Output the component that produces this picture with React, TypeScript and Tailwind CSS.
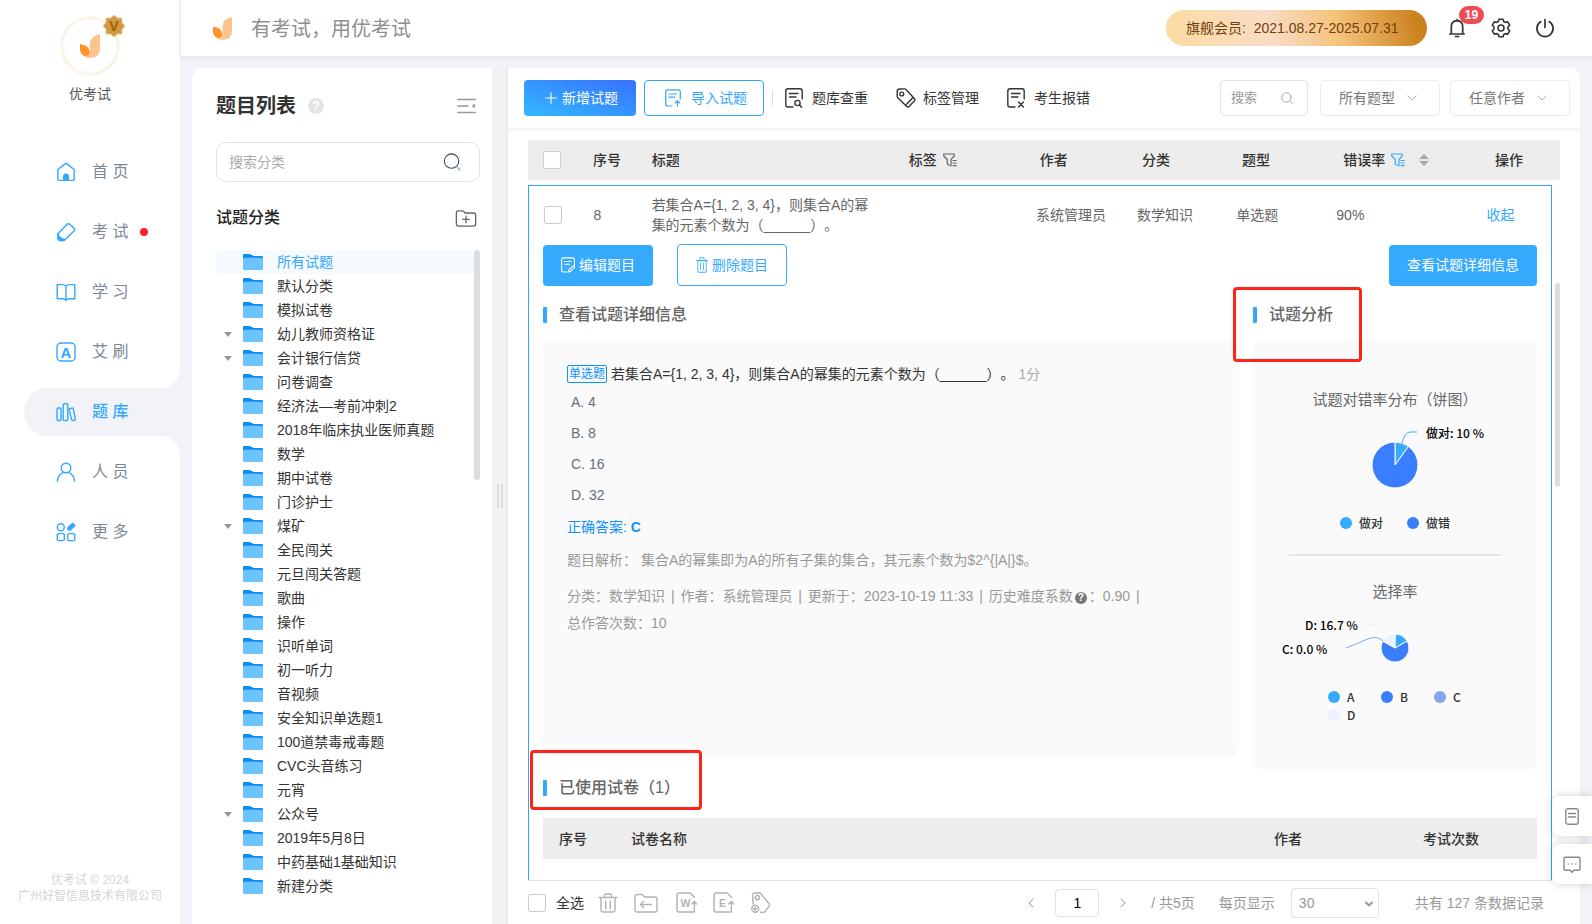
import { useState, type ReactNode, type SVGProps } from 'react';
import { ChevronDown, ChevronLeft, ChevronRight, Plus, Search } from 'lucide-react';

type IconProps = SVGProps<SVGSVGElement>;

function Icon({ children, ...props }: IconProps) {
  return (
    <svg
      viewBox="0 0 20 20"
      fill="none"
      stroke="currentColor"
      strokeWidth="1.4"
      strokeLinecap="round"
      strokeLinejoin="round"
      aria-hidden="true"
      {...props}
    >
      {children}
    </svg>
  );
}

const HomeIcon = (p: IconProps) => (
  <Icon {...p}>
    <path d="M1.800 8.500Q1.800 7.500 2.500 7L9 1.900q1-.7 2 0L17.500 7q.7.5.7 1.500v8.400q0 1.500-1.500 1.500H3.300q-1.500 0-1.500-1.500Z" />
    <path d="M7 18.400v-4a3 3 0 0 1 6 0v4Z" fill="currentColor" stroke="none" />
  </Icon>
);

const ExamIcon = (p: IconProps) => (
  <Icon {...p}>
    <path d="M2 11.800 10.800 2.400q1.600-1.400 3.200 0l4 3.800q1.200 1.400 0 2.800L9.400 17.600q-1 .9-2.400.9H4.200q-2.200-.2-2.200-2.400Z" />
    <path d="M2 11.800q1 4.700 7.400 5.800-1 .9-2.400.9H4.200q-2.200-.2-2.200-2.400Z" fill="currentColor" />
  </Icon>
);

const BookIcon = (p: IconProps) => (
  <Icon {...p}>
    <path d="M10 4v14.500M10 4Q8.500 2.600 6.500 2.600H1.200v14.200h5.600q2 0 3.200 1.600M10 4q1.500-1.400 3.500-1.400h5.300v14.200h-5.600q-2 0-3.200 1.600" />
  </Icon>
);

const AiIcon = (p: IconProps) => (
  <Icon {...p}>
    <rect x="1" y="1" width="18" height="18" rx="4" />
    <text x="10" y="15.500" textAnchor="middle" fontSize="15" fontWeight="bold" fill="currentColor" stroke="none">
      A
    </text>
  </Icon>
);

const LibraryIcon = (p: IconProps) => (
  <Icon {...p}>
    <rect x="1" y="6" width="4" height="12.500" rx="1.200" />
    <rect x="7.200" y="1.800" width="4.600" height="16.700" rx="1.200" />
    <path d="m13.700 6.700 2.300-.6q1.100-.2 1.300.8l2 9.900q.1 1.100-.9 1.400l-1.500.3q-1 .1-1.200-.9l-2.600-9.700q-.2-.9.600-1.200Z" />
  </Icon>
);

const PeopleIcon = (p: IconProps) => (
  <Icon {...p}>
    <circle cx="10" cy="6" r="4.800" />
    <path d="M1.400 19.200q.4-6.200 5.200-8.400M18.600 19.200q-.4-6.200-5.200-8.400" />
  </Icon>
);

const MoreIcon = (p: IconProps) => (
  <Icon {...p}>
    <circle cx="4.800" cy="5.200" r="3.500" />
    <rect x="1.300" y="11.600" width="7" height="7" rx="1" />
    <rect x="11.700" y="11.600" width="7" height="7" rx="1" />
    <path d="m11.700 7.600.6-2.400 4.200-3.800 2.300 2-4.400 4.600Z" fill="currentColor" />
  </Icon>
);

const Leaf = (p: IconProps) => (
  <svg viewBox="0 0 20 24" aria-hidden="true" {...p}>
    <path d="M20 0v15q-.3 8.700-10 9-4-.1-7-2.500l7-3V8.500Q10.800 2 20 0Z" fill="#ffc48c" />
    <path d="M0 10q9.400 1.200 9.700 8-.3 3.700-5.200 4Q0 20 0 15Z" fill="#ff9328" />
  </svg>
);

const FolderIcon = (p: IconProps) => (
  <svg viewBox="0 0 20 16" aria-hidden="true" {...p}>
    <path d="M0 1.200Q0 0 1.200 0H6q1 0 1.800.5l2.700 1.400h8.300q1.200 0 1.200 1.100v4H0Z" fill="#0d8bee" />
    <path d="M0 4.800q0-1.100 1.200-1.100h17.600q1.200 0 1.200 1.100v9.900q0 1.300-1.200 1.300H1.200Q0 16 0 14.700Z" fill="#6cc4ff" />
  </svg>
);

const FolderPlusIcon = (p: IconProps) => (
  <Icon viewBox="0 0 22 18" {...p}>
    <path d="M.8 3.200Q.8 1 3 1h4.200q1 0 1.700.8l1 1.400h9Q21.200 3.200 21.200 5.400v9.400q0 2.200-2.200 2.200H3q-2.200 0-2.200-2.200Z" />
    <path d="M11 6.500v7M7.500 10h7" />
  </Icon>
);

const CollapseIcon = (p: IconProps) => (
  <Icon viewBox="0 0 19 16" {...p}>
    <path d="M.8 1.500h17.400M.8 8h10.400M.8 14.500h17.400" />
    <path d="M18 5.500v5L14.800 8Z" fill="currentColor" stroke="none" />
  </Icon>
);

// Sheet of paper with two text lines, the corner mark is passed as children
const DocIcon = ({ children, ...p }: IconProps) => (
  <Icon viewBox="0 0 18 20" {...p}>
    <path d="M8 19H3q-2.200 0-2.200-2.200V3Q.8.800 3 .8h12q2.200 0 2.200 2.200v8" />
    <path d="M4.500 5.500h8.500M4.500 9h6.500" />
    {children}
  </Icon>
);

const TagIcon = (p: IconProps) => (
  <Icon {...p}>
    <path d="M1.200 3.400Q1.300 1.200 3.500 1l5-.1q1 0 1.700.8l8.300 9q.8 1 0 2l-5.800 6q-1 .8-1.900-.1L1.800 9.800q-.6-.8-.6-1.600Z" />
    <circle cx="5.800" cy="6" r="1.900" />
    <path d="m10.500 16.300 6.300-6.600" />
  </Icon>
);

const FilterIcon = (p: IconProps) => (
  <Icon viewBox="0 0 14 14" strokeWidth="1.200" {...p}>
    <path d="M6.500 12.500 4.300 11V6.500L.8 3V1h10.400v2L8 6.300V13M10 7.500h3.200M10 10h3.200M10 12.600h3.200" />
  </Icon>
);

const TrashIcon = (p: IconProps) => (
  <Icon {...p}>
    <path d="M1 4.500h18M6.500 4.500V2q0-1 1-1h5q1 0 1 1v2.500M3 4.500v12.800Q3 19 4.700 19h10.600q1.700 0 1.700-1.700V4.500M7.700 8v8M12.300 8v8" />
  </Icon>
);

const ExportIcon = ({ letter, ...p }: IconProps & { letter: string }) => (
  <Icon {...p}>
    <path d="M17 19H3q-2 0-2-2V3q0-2 2-2h10.500L17.500 5M17.500 19V9.500M15 11.500 17.500 9l2.200 2.500" />
    <text x="9" y="14.500" textAnchor="middle" fontSize="10" fontWeight="bold" fill="currentColor" stroke="none">
      {letter}
    </text>
  </Icon>
);

const navItems = [
  { label: '首 页', icon: HomeIcon },
  { label: '考 试', icon: ExamIcon, dot: true },
  { label: '学 习', icon: BookIcon },
  { label: '艾 刷', icon: AiIcon },
  { label: '题 库', icon: LibraryIcon, active: true },
  { label: '人 员', icon: PeopleIcon },
  { label: '更 多', icon: MoreIcon },
];

const categories = [
  { name: '所有试题' },
  { name: '默认分类' },
  { name: '模拟试卷' },
  { name: '幼儿教师资格证', children: true },
  { name: '会计银行信贷', children: true },
  { name: '问卷调查' },
  { name: '经济法—考前冲刺2' },
  { name: '2018年临床执业医师真题' },
  { name: '数学' },
  { name: '期中试卷' },
  { name: '门诊护士' },
  { name: '煤矿', children: true },
  { name: '全民闯关' },
  { name: '元旦闯关答题' },
  { name: '歌曲' },
  { name: '操作' },
  { name: '识听单词' },
  { name: '初一听力' },
  { name: '音视频' },
  { name: '安全知识单选题1' },
  { name: '100道禁毒戒毒题' },
  { name: 'CVC头音练习' },
  { name: '元宵' },
  { name: '公众号', children: true },
  { name: '2019年5月8日' },
  { name: '中药基础1基础知识' },
  { name: '新建分类' },
];

function Sidebar() {
  return (
    <aside className="flex w-[180px] shrink-0 flex-col bg-white">
      <div className="flex flex-col items-center pt-4">
        <div className="relative flex size-[60px] items-center justify-center rounded-full border-2 border-[#fbf6ec] shadow-[inset_0_0_0_1px_#f7ead2]">
          <Leaf className="h-[26px] w-5" />
          <svg viewBox="0 0 24 24" className="absolute -top-1 -right-2 size-6" aria-hidden="true">
            <path
              d="m12 1 3.400 3H20v4.600l3 3.400-3 3.400V20h-4.600L12 23l-3.400-3H4v-4.600L1 12l3-3.400V4h4.600Z"
              fill="#cf9a45"
              stroke="#ecc781"
            />
            <text x="12" y="17" textAnchor="middle" fontSize="14" fontWeight="bold" fill="#a35e07">
              V
            </text>
          </svg>
        </div>
        <p className="mt-2 text-sm text-[#555]">优考试</p>
      </div>
      <nav className="mt-11 flex flex-col gap-3">
        {navItems.map(({ label, icon: ItemIcon, active, dot }) => (
          <a
            key={label}
            href="#"
            className={
              active
                ? "relative ml-6 flex h-12 items-center rounded-l-full bg-[#f2f3f8] pl-8 font-medium text-[#33a7ff] before:absolute before:-top-5 before:right-0 before:size-5 before:bg-[radial-gradient(circle_at_0_0,transparent_20px,#f2f3f8_20px)] before:content-[''] after:absolute after:right-0 after:-bottom-5 after:size-5 after:bg-[radial-gradient(circle_at_0_100%,transparent_20px,#f2f3f8_20px)] after:content-['']"
                : 'ml-6 flex h-12 items-center pl-8 text-[#7d8896]'
            }
          >
            <ItemIcon className="size-5 text-[#33a7ff]" />
            <span className="ml-4">{label}</span>
            {dot && <span className="ml-3 size-2 rounded-full bg-[#ff1f2a]" />}
          </a>
        ))}
      </nav>
      <p className="mt-auto pb-5 text-center text-xs leading-4 text-[#d5d5d5]">
        优考试 © 2024
        <br />
        广州好智信息技术有限公司
      </p>
    </aside>
  );
}

function Header() {
  return (
    <header className="relative z-10 flex h-14 shrink-0 items-center border-l border-[#e9eaf1] bg-white pr-[37px] pl-8 shadow-[0_1px_6px_rgba(0,0,0,0.08)]">
      <Leaf className="h-[23px] w-[19px]" />
      <p className="ml-[19px] pt-0.5 text-xl text-[#8f8f8f]">有考试，用优考试</p>
      <div className="ml-auto flex h-9 w-[261px] items-center rounded-full bg-[linear-gradient(75deg,#fbdca6_5%,#f8dcc4_40%,#f5c37c_65%,#cb821d_95%)] pl-5 text-sm whitespace-pre text-[#73400c]">
        旗舰会员:  2021.08.27-2025.07.31
      </div>
      <button type="button" aria-label="消息" className="relative ml-5 text-[#333]">
        <Icon className="size-5" strokeWidth="1.700">
          <path d="M10 1.500v1M4.300 15.800V9q0-6.200 5.700-6.400Q15.700 2.800 15.700 9v6.800M2.800 16h14.400M8.500 18.500h3" />
        </Icon>
        <span className="absolute -top-3 left-3 flex h-[18px] w-[25px] items-center justify-center rounded-full bg-[#f04b52] text-xs font-bold text-white">
          19
        </span>
      </button>
      <button type="button" aria-label="设置" className="ml-6 text-[#333]">
        <Icon className="size-5" strokeWidth="1.600">
          <path d="M8 1.200h4l.7 2.300 1.600.9 2.400-.6 2 3.400-1.700 1.800v2l1.700 1.800-2 3.400-2.400-.6-1.600.9-.7 2.300H8l-.7-2.300-1.600-.9-2.400.6-2-3.400L3 11V9L1.300 7.200l2-3.400 2.400.6 1.600-.9Z" />
          <circle cx="10" cy="10" r="3" />
        </Icon>
      </button>
      <button type="button" aria-label="退出" className="ml-6 text-[#333]">
        <Icon className="size-5" strokeWidth="1.700">
          <path d="M10 1.500v8M5.800 3.600a8.100 8.100 0 1 0 8.400 0" />
        </Icon>
      </button>
    </header>
  );
}

function CategoryPanel() {
  const [selected, setSelected] = useState('所有试题');

  return (
    <section className="flex w-[300px] shrink-0 flex-col overflow-hidden rounded-tl-[10px] bg-white px-6 pr-3">
      <div className="mt-[25px] flex h-[26px] items-center pr-1">
        <h1 className="text-xl font-bold text-[#333]">题目列表</h1>
        <span className="ml-3 flex size-4 items-center justify-center rounded-full bg-[#e4e4e4] text-xs font-bold text-white">
          ?
        </span>
        <button type="button" aria-label="收起列表" className="ml-auto text-[#999]">
          <CollapseIcon className="h-4 w-[19px]" />
        </button>
      </div>
      <label className="mt-[23px] flex h-10 shrink-0 items-center rounded-[10px] border border-[#e2e2e2] pr-[18px] pl-3">
        <input
          aria-label="搜索分类"
          placeholder="搜索分类"
          className="min-w-0 flex-1 text-sm outline-none placeholder:text-[#aaa]"
        />
        <Icon className="size-[18px] text-[#444]" strokeWidth="1.200">
          <circle cx="9.500" cy="9" r="8" />
          <path d="m15.500 15.500 3.300 3.300" stroke="#6cc4ff" strokeWidth="1.800" />
        </Icon>
      </label>
      <div className="mt-6 flex h-6 shrink-0 items-center pr-[3px]">
        <h2 className="font-medium text-[#222]">试题分类</h2>
        <button type="button" aria-label="新建分类" className="ml-auto text-[#666]">
          <FolderPlusIcon className="h-[17px] w-[22px]" />
        </button>
      </div>
      <div className="mt-5 flex min-h-0 flex-1">
        <ul className="min-w-0 flex-1 text-sm text-[#333]">
          {categories.map((c) => (
            <li key={c.name}>
              <button
                type="button"
                onClick={() => setSelected(c.name)}
                className={
                  c.name === selected
                    ? 'flex h-6 w-full items-center rounded bg-[#f5faff] text-[#33a7ff]'
                    : 'flex h-6 w-full items-center'
                }
              >
                <span className="flex w-[27px] pl-2">
                  {c.children && (
                    <svg viewBox="0 0 8 5" className="h-[5px] w-2" aria-hidden="true">
                      <path d="M0 0h8L4 5Z" fill="#999" />
                    </svg>
                  )}
                </span>
                <FolderIcon className="h-4 w-5" />
                <span className="ml-3.5 whitespace-nowrap">{c.name}</span>
              </button>
            </li>
          ))}
        </ul>
        <div className="h-[230px] w-1.5 rounded-full bg-[#dcdddf]" />
      </div>
    </section>
  );
}

function ToolbarSelect({ label, options }: { label: string; options: string[] }) {
  return (
    <div className="relative w-[120px]">
      <select
        aria-label={label}
        className="h-9 w-full appearance-none rounded border border-[#ececec] bg-white pl-[18px] text-sm text-[#777] outline-none"
      >
        {options.map((o) => (
          <option key={o}>{o}</option>
        ))}
      </select>
      <ChevronDown className="pointer-events-none absolute top-2.5 right-5 size-4 text-[#999]" strokeWidth={1.2} />
    </div>
  );
}

function Toolbar() {
  return (
    <div className="flex h-[60px] shrink-0 items-center pr-2.5 pl-4 text-sm text-[#333] shadow-[0_1px_4px_rgba(0,0,0,0.1)]">
      <button
        type="button"
        className="flex h-9 w-28 items-center justify-center gap-0.5 rounded bg-linear-to-tr from-[#36b8ff] to-[#386fff] text-white"
      >
        <Plus className="size-[18px]" strokeWidth={1.5} />
        新增试题
      </button>
      <button
        type="button"
        className="ml-2 flex h-9 w-[120px] items-center justify-center gap-2.5 rounded border border-[#33a7ff] pl-1 text-[#33a7ff]"
      >
        <DocIcon className="h-[18px] w-4">
          <path d="M14 19v-6M11.500 15.500 14 13l2.500 2.500" />
        </DocIcon>
        导入试题
      </button>
      <span className="ml-2 h-4 w-px bg-[#ddd]" />
      <button type="button" className="ml-3 flex items-center gap-[9px]">
        <DocIcon className="h-5 w-[18px]">
          <circle cx="12.500" cy="15" r="2.600" />
          <path d="m14.500 17 2.200 2.200" />
        </DocIcon>
        题库查重
      </button>
      <button type="button" className="ml-7 flex items-center gap-[7px]">
        <TagIcon className="size-5" />
        标签管理
      </button>
      <button type="button" className="ml-7 flex items-center gap-[9px]">
        <DocIcon className="h-5 w-[18px]">
          <path d="m11.500 14 5 5M16.500 14l-5 5" />
        </DocIcon>
        考生报错
      </button>
      <label className="ml-auto flex h-9 w-[88px] items-center rounded border border-[#e2e2e2] px-2.5">
        <input aria-label="搜索" placeholder="搜索" className="w-0 flex-1 text-[13px] outline-none placeholder:text-[#999]" />
        <Search className="mr-[3px] size-3.5 text-[#999]" strokeWidth={1.5} />
      </label>
      <div className="ml-3 flex gap-2.5">
        <ToolbarSelect label="题型" options={['所有题型', '单选题', '多选题', '判断题']} />
        <ToolbarSelect label="作者" options={['任意作者', '系统管理员']} />
      </div>
    </div>
  );
}

function Checkbox({ label }: { label: string }) {
  return (
    <input
      type="checkbox"
      aria-label={label}
      className="block size-[18px] appearance-none rounded-[2px] border border-[#ccc] bg-white checked:bg-[#33a7ff]"
    />
  );
}

// Header and body are separate tables, so both share these column widths
function Columns() {
  return (
    <colgroup>
      <col className="w-[6.3%]" />
      <col className="w-[5.7%]" />
      <col className="w-[24.9%]" />
      <col className="w-[12.7%]" />
      <col className="w-[9.9%]" />
      <col className="w-[9.7%]" />
      <col className="w-[9.8%]" />
      <col className="w-[14.7%]" />
      <col className="w-[6.3%]" />
    </colgroup>
  );
}

function SectionTitle({ children }: { children: ReactNode }) {
  return (
    <h3 className="flex h-5 items-center gap-3 font-medium text-[#666]">
      <span className="h-4 w-1 rounded-[1px] bg-[#33a7ff]" />
      {children}
    </h3>
  );
}

function LegendItem({ color, label }: { color: string; label: string }) {
  return (
    <span className="flex items-center gap-[7px]">
      <span className="size-3 rounded-full" style={{ backgroundColor: color }} />
      {label}
    </span>
  );
}

function slice(cx: number, cy: number, r: number, from: number, to: number) {
  const point = (t: number) => {
    const a = t * 2 * Math.PI - Math.PI / 2;
    return `${cx + r * Math.cos(a)} ${cy + r * Math.sin(a)}`;
  };
  return `M${cx} ${cy}L${point(from)}A${r} ${r} 0 ${to - from > 0.5 ? 1 : 0} 1 ${point(to)}Z`;
}

function Analysis() {
  return (
    <div className="mt-[15px] flex flex-col rounded-[10px] bg-[#fafafa] px-9 pt-[49px] pb-[46px] font-['Noto_Sans_CJK_SC',sans-serif] text-xs font-medium text-[#333]">
      <h4 className="text-center text-[15px] leading-5 font-normal text-[#666]">试题对错率分布（饼图）</h4>
      <svg viewBox="0 0 212 80" className="mt-[11px] h-20 w-[212px]">
        <path d={slice(106, 45, 23, 0, 0.1)} fill="#36aaff" stroke="#fff" />
        <path d={slice(106, 45, 23, 0.1, 1)} fill="#397eff" stroke="#fff" />
        <path d="M113 23q3-11 8-11h7" fill="none" stroke="#36aaff" />
        <text x="137" y="18" fill="#000">
          做对: 10 %
        </text>
      </svg>
      <div className="mt-[15px] flex h-4 justify-center gap-6">
        <LegendItem color="#36aaff" label="做对" />
        <LegendItem color="#397eff" label="做错" />
      </div>
      <hr className="mt-[23px] border-t-2 border-[#e6e6e6]" />
      <h4 className="mt-[25px] text-center text-[15px] leading-5 font-normal text-[#666]">选择率</h4>
      <svg viewBox="0 0 212 64" className="mt-[9px] h-16 w-[212px] overflow-visible">
        <path d={slice(106, 38, 14, 0, 0.167)} fill="#36aaff" stroke="#fff" />
        <path d={slice(106, 38, 14, 0.167, 0.833)} fill="#397eff" stroke="#fff" />
        <path d={slice(106, 38, 14, 0.833, 1)} fill="#ecf0ff" stroke="#fff" />
        <path d="M79 14q15 0 20 12" fill="none" stroke="#ecf0ff" />
        <path d="M57 38 80 28.500Q88 25.500 94 31" fill="none" stroke="#83a6ec" />
        <text x="16" y="20" fill="#000">
          D: 16.7 %
        </text>
        <text x="-7" y="44" fill="#000">
          C: 0.0 %
        </text>
      </svg>
      <div className="mx-auto mt-3.5 grid grid-cols-[53px_53px_28px] leading-[18px]">
        <LegendItem color="#36aaff" label="A" />
        <LegendItem color="#397eff" label="B" />
        <LegendItem color="#83a6ec" label="C" />
        <LegendItem color="#ecf0ff" label="D" />
      </div>
    </div>
  );
}

function Divider() {
  return <span className="mx-0.5">|</span>;
}

function QuestionDetail() {
  return (
    <div className="mt-[15px] rounded-[10px] bg-[#fafafa] px-6 pt-[21px] pb-[120px] text-sm text-[#999]">
      <p className="flex h-[26px] items-center text-[#333]">
        <span className="rounded-[2px] border border-[#0d93ff] px-px text-xs leading-4 text-[#0d93ff]">单选题</span>
        <span className="ml-1">{'若集合A={1, 2, 3, 4}，则集合A的幂集的元素个数为（______）。'}</span>
        <span className="ml-1 text-[#aaa]">1分</span>
      </p>
      <ul className="pl-1 leading-[31px] text-[#666e78]">
        <li>A. 4</li>
        <li>B. 8</li>
        <li>C. 16</li>
        <li>D. 32</li>
      </ul>
      <p className="leading-8 text-[#0d93ff]">
        正确答案: <b>C</b>
      </p>
      <p className="leading-[34px]">{'题目解析： 集合A的幂集即为A的所有子集的集合，其元素个数为$2^{|A|}$。'}</p>
      <p className="mt-1.5 leading-[27px]">
        分类：数学知识 <Divider /> 作者：系统管理员 <Divider /> 更新于：2023-10-19 11:33 <Divider /> 历史难度系数
        <span className="mx-0.5 inline-flex size-3 items-center justify-center rounded-full bg-[#777] text-[10px] leading-none font-bold text-white">
          ?
        </span>
        ：0.90 <Divider /> <span className="inline-block">总作答次数：10</span>
      </p>
    </div>
  );
}

function QuestionRow() {
  return (
    <div className="min-w-0 flex-1 self-start border border-[#33a7ff] pb-10">
      <table className="w-full table-fixed text-left text-sm text-[#666]">
        <Columns />
        <tbody>
          <tr className="h-[58px]">
            <td className="pl-[15px]">
              <Checkbox label="选择试题8" />
            </td>
            <td>8</td>
            <td className="pr-7 leading-5">{'若集合A={1, 2, 3, 4}，则集合A的幂集的元素个数为（______）。'}</td>
            <td />
            <td>系统管理员</td>
            <td>数学知识</td>
            <td>单选题</td>
            <td>90%</td>
            <td>
              <a href="#" className="text-[#33a7ff]">
                收起
              </a>
            </td>
          </tr>
        </tbody>
      </table>
      <div className="px-3.5">
        <div className="flex h-[42px] items-center text-sm">
          <button type="button" className="flex h-[41px] w-[110px] items-center justify-center gap-1 rounded bg-[#36aaff] text-white">
            <DocIcon className="h-4 w-3.5">
              <path d="m9.500 19 .8-3 6-5.500 1.800 2-6 5.700Z" />
            </DocIcon>
            编辑题目
          </button>
          <button
            type="button"
            className="ml-6 flex h-[42px] w-[110px] items-center justify-center gap-1 rounded border border-[#36aaff] text-[#36aaff]"
          >
            <TrashIcon className="h-4 w-3" preserveAspectRatio="none" />
            删除题目
          </button>
          <button type="button" className="ml-auto h-[41px] w-[148px] rounded bg-[#36aaff] text-white">
            查看试题详细信息
          </button>
        </div>
        <div className="mt-[19px] flex items-start gap-3.5">
          <section className="min-w-0 flex-1">
            <SectionTitle>查看试题详细信息</SectionTitle>
            <QuestionDetail />
          </section>
          <section className="relative w-[284px] shrink-0">
            <SectionTitle>试题分析</SectionTitle>
            <Analysis />
            <span className="pointer-events-none absolute -top-[18px] -left-5 h-[75px] w-[129px] rounded border-3 border-[#ff2317]" />
          </section>
        </div>
        <section className="relative mt-2">
          <SectionTitle>已使用试卷（1）</SectionTitle>
          <span className="pointer-events-none absolute -top-7 -left-[13px] h-[60px] w-[172px] rounded border-3 border-[#ff2317]" />
          <table className="mt-5 w-full table-fixed text-left text-sm text-[#333]">
            <thead>
              <tr className="h-[41px] bg-[#ededed]">
                <th className="w-[88px] pl-4 font-medium">序号</th>
                <th className="font-medium">试卷名称</th>
                <th className="w-[149px] font-medium">作者</th>
                <th className="w-[114px] font-medium">考试次数</th>
              </tr>
            </thead>
          </table>
        </section>
      </div>
    </div>
  );
}

function Footer() {
  return (
    <footer className="mr-2 flex h-11 shrink-0 items-center border-t border-[#e2e2e2] pr-2 text-sm text-[#999]">
      <label className="flex items-center gap-2.5 text-[#333]">
        <Checkbox label="全选" />
        全选
      </label>
      <div className="ml-3.5 flex items-center gap-4 text-[#b3b3b3]">
        <button type="button" aria-label="删除">
          <TrashIcon className="size-5" />
        </button>
        <button type="button" aria-label="移动">
          <Icon viewBox="0 0 24 20" className="h-5 w-6">
            <path d="M1 3.500Q1 1.500 3 1.500h5l2.500 2.500H21q2 0 2 2v11q0 2-2 2H3q-2 0-2-2ZM17.500 11.500h-11M9.500 8.500l-3 3 3 3" />
          </Icon>
        </button>
        <button type="button" aria-label="导出Word" className="pl-0.5">
          <ExportIcon letter="W" className="size-[21px]" />
        </button>
        <button type="button" aria-label="导出Excel">
          <ExportIcon letter="E" className="size-[21px]" />
        </button>
        <button type="button" aria-label="添加标签">
          <Icon className="size-[21px]">
            <path d="M3 11.500 2.400 2.800Q2.500 1 4.200.9L8.700.8q1 0 1.600.7l8 10q.6 1 0 1.900L14.500 18.500q-.6.700-1.500.7h-3" />
            <circle cx="7" cy="5.300" r="2" />
            <circle cx="5" cy="16" r="3.300" />
            <path d="M5 14.500v3M3.500 16h3" />
          </Icon>
        </button>
      </div>
      <div className="ml-auto flex items-center">
        <button type="button" aria-label="上一页">
          <ChevronLeft className="size-4" strokeWidth={1.5} />
        </button>
        <input
          aria-label="页码"
          defaultValue="1"
          className="ml-4 h-7 w-11 rounded border border-[#e2e2e2] text-center text-black outline-none"
        />
        <button type="button" aria-label="下一页" className="ml-4">
          <ChevronRight className="size-4" strokeWidth={1.5} />
        </button>
        <span className="ml-5">/ 共5页</span>
        <label htmlFor="page-size" className="ml-6">
          每页显示
        </label>
        <div className="relative ml-4">
          <select
            id="page-size"
            defaultValue="30"
            className="h-[30px] w-[88px] appearance-none rounded border border-[#e2e2e2] bg-white pl-[7px] outline-none"
          >
            <option>10</option>
            <option>30</option>
            <option>50</option>
          </select>
          <ChevronDown className="pointer-events-none absolute top-2.5 right-1 size-3" strokeWidth={4} />
        </div>
        <span className="ml-9">共有 127 条数据记录</span>
      </div>
    </footer>
  );
}

function QuestionPanel() {
  return (
    <main className="flex min-w-0 flex-1 flex-col overflow-hidden rounded-tr-[10px] bg-white">
      <Toolbar />
      <div className="mt-3 flex min-h-0 flex-1 flex-col px-5">
        <table className="w-full table-fixed text-left text-sm text-[#333]">
          <Columns />
          <thead>
            <tr className="h-10 bg-[#ededed] *:font-medium">
              <th className="pl-[15px]">
                <Checkbox label="选择全部试题" />
              </th>
              <th>序号</th>
              <th>标题</th>
              <th>
                <span className="flex items-center gap-1.5">
                  标签
                  <FilterIcon className="size-3.5 text-[#666]" />
                </span>
              </th>
              <th>作者</th>
              <th>分类</th>
              <th>题型</th>
              <th>
                <span className="flex items-center gap-1.5">
                  错误率
                  <FilterIcon className="size-3.5 text-[#33a7ff]" />
                  <svg viewBox="0 0 10 12" className="ml-2 h-3 w-2.5" aria-hidden="true">
                    <path d="M5 0 10 5H0ZM5 12 0 7h10Z" fill="#a8a8a8" />
                  </svg>
                </span>
              </th>
              <th>操作</th>
            </tr>
          </thead>
        </table>
        <div className="mt-[5px] flex min-h-0 flex-1 gap-[3px] overflow-hidden">
          <QuestionRow />
          <div className="mt-[98px] h-[204px] w-[5px] rounded-full bg-[#dedede]" />
        </div>
        <Footer />
      </div>
    </main>
  );
}

function FloatingTools() {
  return (
    <div className="fixed right-0 bottom-10 z-20 flex flex-col gap-2 text-[#888]">
      <button
        type="button"
        aria-label="文档"
        className="flex size-10 items-center justify-center rounded-l-lg bg-white shadow-[0_0_10px_rgba(0,0,0,0.18)]"
      >
        <Icon viewBox="0 0 14 17" className="h-[17px] w-3.5">
          <rect x=".8" y=".8" width="12.400" height="15.400" rx="2" />
          <path d="M3.500 5.500h7M3.500 9h7" />
        </Icon>
      </button>
      <button
        type="button"
        aria-label="客服"
        className="flex size-10 items-center justify-center rounded-l-lg bg-white shadow-[0_0_10px_rgba(0,0,0,0.18)]"
      >
        <Icon viewBox="0 0 18 17" className="h-[17px] w-[18px]">
          <path d="M2 1.200h14q1 0 1 1v11q0 1-1 1h-5L9 16.200l-2-2H2q-1 0-1-1v-11q0-1 1-1ZM5.200 8h.1M9 8h.1M12.800 8h.1" />
        </Icon>
      </button>
    </div>
  );
}

export default function App() {
  return (
    <div className="flex h-screen overflow-hidden bg-[#f2f3f8] font-['Liberation_Sans','Noto_Sans_CJK_SC',sans-serif] [text-spacing-trim:space-all]">
      <Sidebar />
      <div className="flex min-w-0 flex-1 flex-col">
        <Header />
        <div className="flex min-h-0 flex-1 pt-3 pr-3 pl-3">
          <CategoryPanel />
          <div className="flex w-4 shrink-0 items-center justify-center gap-0.5 border-r border-[#e4e4e4] bg-[#f1f1f1]">
            <span className="h-6 w-0.5 bg-[#dcdcdc]" />
            <span className="h-6 w-0.5 bg-[#dcdcdc]" />
          </div>
          <QuestionPanel />
        </div>
      </div>
      <FloatingTools />
    </div>
  );
}
